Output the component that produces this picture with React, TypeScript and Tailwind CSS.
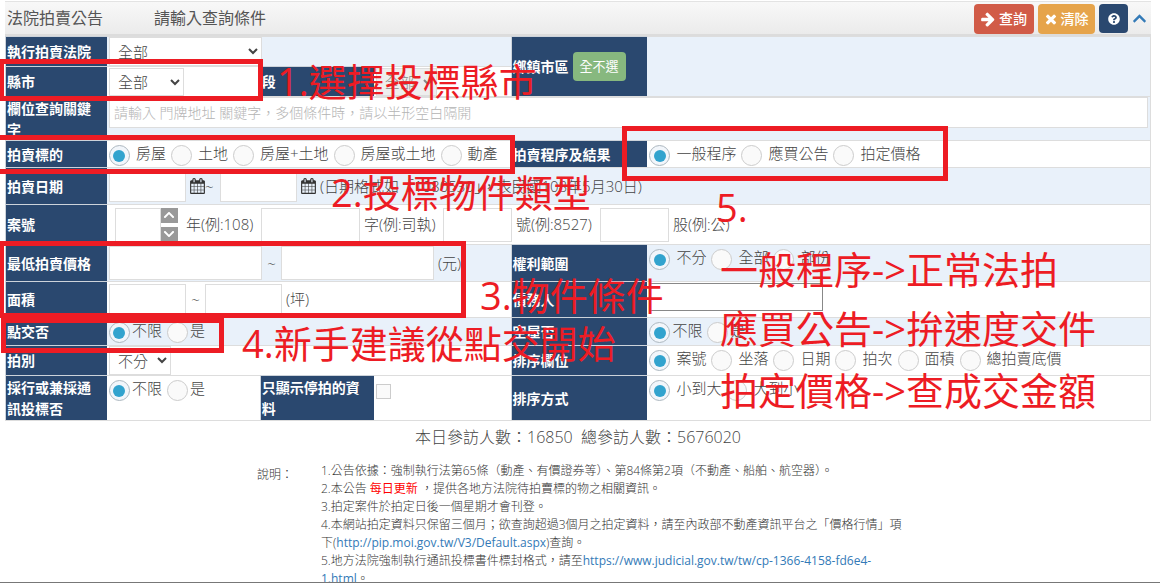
import React from "react";
import { FaChevronUp, FaQuestionCircle } from "react-icons/fa";

type Children = { children?: React.ReactNode };

function ArrowRightIcon() {
  return (
    <svg viewBox="0 0 1536 1792" className="h-4 w-3.5 fill-current" aria-hidden="true">
      <path d="M1472 960q0 54-37 91l-651 651q-39 37-91 37-51 0-90-37l-75-75q-38-38-38-91t38-91l293-293h-704q-52 0-84.5-37.5t-32.5-90.5v-128q0-53 32.5-90.5t84.5-37.5h704l-293-294q-38-36-38-90t38-90l75-75q38-38 90-38 53 0 91 38l651 651q37 35 37 90z" />
    </svg>
  );
}

function TimesIcon() {
  return (
    <svg viewBox="0 0 1408 1792" className="h-4 w-3 fill-current" aria-hidden="true">
      <path d="M1298 1322q0 40-28 68l-136 136q-28 28-68 28t-68-28l-294-294-294 294q-28 28-68 28t-68-28l-136-136q-28-28-28-68t28-68l294-294-294-294q-28-28-28-68t28-68l136-136q28-28 68-28t68 28l294 294 294-294q28-28 68-28t68 28l136 136q28 28 28 68t-28 68l-294 294 294 294q28 28 28 68z" />
    </svg>
  );
}

function CalendarIcon() {
  return (
    <svg viewBox="0 0 1664 1792" className="h-4 w-[15px] shrink-0 fill-[#333]" aria-hidden="true">
      <path d="M128 1664h288v-288h-288v288zm352 0h320v-288h-320v288zm-352-352h288v-320h-288v320zm352 0h320v-320h-320v320zm-352-384h288v-288h-288v288zm736 736h320v-288h-320v288zm-384-736h320v-288h-320v288zm768 736h288v-288h-288v288zm-384-352h320v-320h-320v320zm-352-864v-288q0-13-9.5-22.5t-22.5-9.5h-64q-13 0-22.5 9.5t-9.5 22.5v288q0 13 9.5 22.5t22.5 9.5h64q13 0 22.5-9.5t9.5-22.5zm736 864h288v-320h-288v320zm-384-384h320v-288h-320v288zm384 0h288v-288h-288v288zm32-480v-288q0-13-9.5-22.5t-22.5-9.5h-64q-13 0-22.5 9.5t-9.5 22.5v288q0 13 9.5 22.5t22.5 9.5h64q13 0 22.5-9.5t9.5-22.5zm384-64v1280q0 52-38 90t-90 38h-1408q-52 0-90-38t-38-90v-1280q0-52 38-90t90-38h128v-96q0-66 47-113t113-47h64q66 0 113 47t47 113v96h384v-96q0-66 47-113t113-47h64q66 0 113 47t47 113v96h128q52 0 90 38t38 90z" />
    </svg>
  );
}

function Label({ children, className = "", htmlFor }: Children & { className?: string; htmlFor?: string }) {
  return (
    <div className={`flex items-center border-t border-l border-[#cdd3da] bg-[#2a486f] pr-2 pl-px text-sm leading-[21px] font-bold text-white ${className}`}>
      {htmlFor ? <label htmlFor={htmlFor}>{children}</label> : <span>{children}</span>}
    </div>
  );
}

function Field({ children, className = "" }: Children & { className?: string }) {
  return <div className={`flex border-t border-[#ddd] pl-0.5 ${className}`}>{children}</div>;
}

function TextBox({ className, label, id }: { className: string; label?: string; id?: string }) {
  return <input type="text" id={id} aria-label={label} className={`border border-[#ddd] bg-white px-1 outline-none ${className}`} />;
}

function Radios({ name, label, options, tight = false }: { name: string; label: string; options: string[]; tight?: boolean }) {
  return (
    <div role="radiogroup" aria-label={label} className="flex items-start gap-[5px] pt-1">
      {options.map((o, i) => (
        <label key={o} className={tight ? "flex items-start gap-0.5" : "flex items-start gap-1.5"}>
          <input
            type="radio"
            name={name}
            defaultChecked={i === 0}
            className="grid size-[21px] shrink-0 appearance-none place-content-center rounded-full border border-[#ccc] bg-[#fafafa] checked:border-[#adb8c0] checked:bg-[#f2f6fb] checked:before:block checked:before:size-3 checked:before:rounded-full checked:before:bg-[#32a3ce] checked:before:content-['']"
          />
          <span className="leading-4 whitespace-nowrap">{o}</span>
        </label>
      ))}
    </div>
  );
}

function Note({ className, children }: Children & { className: string }) {
  return <p className={`absolute text-[38px] leading-[38px] font-normal whitespace-nowrap text-[#ed1c24] ${className}`}>{children}</p>;
}

function Frame({ className }: { className: string }) {
  return <div className={`absolute border-[5px] border-[#ed1c24] ${className}`} />;
}

export default function App() {
  return (
    <div
      lang="zh-TW"
      className="relative h-screen overflow-hidden border-b border-[#777] bg-white font-['Open_Sans','Noto_Sans_CJK_TC',sans-serif] text-[15px] font-light text-[#444]"
    >
      <main className="pt-px pr-[9px] pl-[5px]">
        <header className="flex h-[35px] items-center border-t border-b-2 border-t-[#e3e3e3] border-b-[#dcdcdc] bg-linear-to-b from-[#f8f8f8] to-[#ebebeb]">
          <h1 className="flex gap-[51px] pl-0.5 text-base font-normal text-[#555]">
            <span>法院拍賣公告</span>
            <span>請輸入查詢條件</span>
          </h1>
          <div className="ml-auto flex items-center gap-1 pt-px pr-1 text-sm font-medium text-white">
            <button type="button" className="flex h-[30px] w-[60px] items-center justify-center gap-1 rounded bg-[#d15b47]">
              <ArrowRightIcon />
              查詢
            </button>
            <button type="button" className="flex h-[30px] w-[57px] items-center justify-center gap-1 rounded bg-[#e6a44b]">
              <TimesIcon />
              清除
            </button>
            <button type="button" aria-label="說明" className="flex h-[29px] w-[29px] items-center justify-center rounded bg-[#2a486f]">
              <FaQuestionCircle className="size-3" />
            </button>
            <button type="button" aria-label="收合" className="text-[#337ab7]">
              <FaChevronUp className="size-[15px]" />
            </button>
          </div>
        </header>

        <form className="grid grid-cols-[102fr_153fr_114fr_137fr_137fr_503fr] border-r border-b border-[#ddd]">
          <Label className="min-h-[30px]" htmlFor="court">執行拍賣法院</Label>
          <Field className="col-span-3 bg-[#e9f1fa]">
            <select id="court" className="h-[29px] w-[153px] border border-[#ddd] bg-white pl-1">
              <option>全部</option>
            </select>
          </Field>
          <Label className="row-span-2">
            <span className="flex items-center gap-1">
              鄉鎮市區
              <button type="button" className="h-[29px] w-[53px] rounded bg-[#87b87f] text-[13px] font-normal">全不選</button>
            </span>
          </Label>
          <Field className="row-span-2 bg-[#e9f1fa]" />

          <Label className="min-h-[30px]" htmlFor="county">縣市</Label>
          <Field className="items-center bg-white">
            <select id="county" className="h-7 w-[75px] border border-[#ddd] bg-white pl-1">
              <option>全部</option>
            </select>
          </Field>
          <Label htmlFor="section">段</Label>
          <Field className="items-center bg-white">
            <select id="section" disabled className="h-7 w-[61px] border border-[#ddd] bg-[#eee] pl-1 text-[#888]">
              <option>全部</option>
            </select>
          </Field>

          <Label className="min-h-[44px]" htmlFor="keyword">欄位查詢關鍵字</Label>
          <Field className="col-span-5 items-start bg-[#e9f1fa] pr-0.5">
            <input
              id="keyword"
              type="text"
              placeholder="請輸入 門牌地址 關鍵字，多個條件時，請以半形空白隔開"
              className="h-[31px] w-full border border-[#ddd] bg-white px-1 text-sm placeholder:text-[#b4b4b4]"
            />
          </Field>

          <Label className="min-h-[27px]">拍賣標的</Label>
          <Field className="col-span-3 bg-white">
            <Radios name="target" label="拍賣標的" options={["房屋", "土地", "房屋+土地", "房屋或土地", "動產"]} />
          </Field>
          <Label>拍賣程序及結果</Label>
          <Field className="bg-white">
            <Radios name="procedure" label="拍賣程序及結果" options={["一般程序", "應買公告", "拍定價格"]} />
          </Field>

          <Label className="min-h-[37px]">拍賣日期</Label>
          <Field className="col-span-5 items-center bg-[#e9f1fa]">
            <TextBox label="起始日期" className="h-8 w-[77px]" />
            <span className="flex w-[34px] items-center pl-1">
              <CalendarIcon />~
            </span>
            <TextBox label="結束日期" className="h-8 w-[77px]" />
            <span className="flex items-center gap-1 pl-1 whitespace-nowrap">
              <CalendarIcon />
              (日期格式如「1080530」，表民國108年5月30日)
            </span>
          </Field>

          <Label className="min-h-[40px]">案號</Label>
          <Field className="col-span-5 items-center bg-white">
            <TextBox label="年" className="ml-1.5 h-[34px] w-[46px]" />
            <span className="flex h-[34px] flex-col justify-between text-white">
              <button type="button" aria-label="增加" className="flex h-[15px] w-[17px] items-center justify-center bg-[#999]">
                <FaChevronUp className="size-3" />
              </button>
              <button type="button" aria-label="減少" className="flex h-[15px] w-[17px] rotate-180 items-center justify-center bg-[#999]">
                <FaChevronUp className="size-3" />
              </button>
            </span>
            <span className="w-[83px] pl-2">年(例:108)</span>
            <TextBox label="字" className="h-[34px] w-[99px]" />
            <span className="w-[83px] pl-1">字(例:司執)</span>
            <TextBox label="號" className="h-[34px] w-[69px]" />
            <span className="w-[88px] pl-1">號(例:8527)</span>
            <TextBox label="股" className="h-[34px] w-[69px]" />
            <span className="pl-1">股(例:公)</span>
          </Field>

          <Label className="min-h-[37px]">最低拍賣價格</Label>
          <Field className="col-span-3 items-center bg-[#e9f1fa]">
            <TextBox label="最低價格" className="h-[34px] w-[153px]" />
            <span className="w-[19px] text-center">~</span>
            <TextBox label="最高價格" className="h-[34px] w-[153px]" />
            <span className="pl-1">(元)</span>
          </Field>
          <Label>權利範圍</Label>
          <Field className="bg-[#e9f1fa]">
            <Radios name="rights" label="權利範圍" options={["不分", "全部", "部份"]} />
          </Field>

          <Label className="min-h-[36px]">面積</Label>
          <Field className="col-span-3 items-center bg-white">
            <TextBox label="最小面積" className="h-8 w-[77px]" />
            <span className="w-[19px] text-center">~</span>
            <TextBox label="最大面積" className="h-8 w-[77px]" />
            <span className="pl-1">(坪)</span>
          </Field>
          <Label htmlFor="debtor">債務人</Label>
          <Field className="items-start bg-white pt-px">
            <input id="debtor" type="text" className="h-7 w-[174px] border border-[#888] bg-white px-1" />
          </Field>

          <Label className="min-h-[28px]">點交否</Label>
          <Field className="col-span-3 bg-[#e9f1fa]">
            <Radios name="handover" label="點交否" options={["不限", "是"]} tight />
          </Field>
          <Label>空屋否</Label>
          <Field className="bg-[#e9f1fa]">
            <Radios name="vacant" label="空屋否" options={["不限", "是"]} tight />
          </Field>

          <Label className="min-h-[30px]" htmlFor="round">拍別</Label>
          <Field className="col-span-3 bg-white">
            <select id="round" className="h-[29px] w-[62px] border border-[#ddd] bg-white pl-1">
              <option>不分</option>
            </select>
          </Field>
          <Label>排序欄位</Label>
          <Field className="bg-white">
            <Radios name="sort" label="排序欄位" options={["案號", "坐落", "日期", "拍次", "面積", "總拍賣底價"]} />
          </Field>

          <Label className="min-h-[45px]">採行或兼採通訊投標否</Label>
          <Field className="bg-white">
            <Radios name="mail" label="採行或兼採通訊投標否" options={["不限", "是"]} tight />
          </Field>
          <Label htmlFor="stopped">只顯示停拍的資料</Label>
          <Field className="items-start bg-white pt-2">
            <input id="stopped" type="checkbox" className="size-[15px] appearance-none border border-[#ccc] bg-[#fafafa]" />
          </Field>
          <Label>排序方式</Label>
          <Field className="bg-white">
            <Radios name="order" label="排序方式" options={["小到大", "大到小"]} />
          </Field>
        </form>

        <p className="pt-1.5 text-center text-base leading-5 whitespace-pre">本日參訪人數：16850{"  "}總參訪人數：5676020</p>

        <section className="mx-auto mt-[15px] flex w-[650px] max-w-full pl-1 text-xs leading-[18px] text-[#333]">
          <h2 className="w-16 shrink-0 pt-1">說明：</h2>
          <div>
            <p>1.公告依據：強制執行法第65條（動產、有價證券等）、第84條第2項（不動產、船舶、航空器）。</p>
            <p>
              2.本公告 <span className="font-normal text-[#f00]">每日更新</span> ，提供各地方法院待拍賣標的物之相關資訊。
            </p>
            <p>3.拍定案件於拍定日後一個星期才會刊登。</p>
            <p>
              4.本網站拍定資料只保留三個月；欲查詢超過3個月之拍定資料，請至內政部不動產資訊平台之「價格行情」項下(
              <a href="http://pip.moi.gov.tw/V3/Default.aspx" className="font-normal text-[#337ab7]">http://pip.moi.gov.tw/V3/Default.aspx</a>)查詢。
            </p>
            <p>
              5.地方法院強制執行通訊投標書件標封格式，請至
              <a href="https://www.judicial.gov.tw/tw/cp-1366-4158-fd6e4-1.html" className="font-normal text-[#337ab7]">https://www.judicial.gov.tw/tw/cp-1366-4158-fd6e4-1.html</a>。
            </p>
          </div>
        </section>
      </main>

      <div className="pointer-events-none absolute inset-0">
        <Frame className="top-[59px] -left-px h-[42px] w-[264px]" />
        <Frame className="top-[135px] -left-[5px] h-[39px] w-[520px]" />
        <Frame className="top-[241px] -left-px h-[77px] w-[467px]" />
        <Frame className="top-[318px] left-px h-[35px] w-[223px]" />
        <Frame className="top-[126px] left-[622px] h-[55px] w-[326px]" />
        <Note className="top-[62px] left-[277px]">1.選擇投標縣市</Note>
        <Note className="top-[173px] left-[331px]">2.投標物件類型</Note>
        <Note className="top-[276px] left-[480px]">3.物件條件</Note>
        <Note className="top-[324px] left-[242px]">4.新手建議從點交開始</Note>
        <Note className="top-[188px] left-[716px]">5.</Note>
        <Note className="top-[250px] left-[720px]">一般程序-&gt;正常法拍</Note>
        <Note className="top-[309px] left-[720px]">應買公告-&gt;拚速度交件</Note>
        <Note className="top-[371px] left-[720px]">拍定價格-&gt;查成交金額</Note>
      </div>
    </div>
  );
}
